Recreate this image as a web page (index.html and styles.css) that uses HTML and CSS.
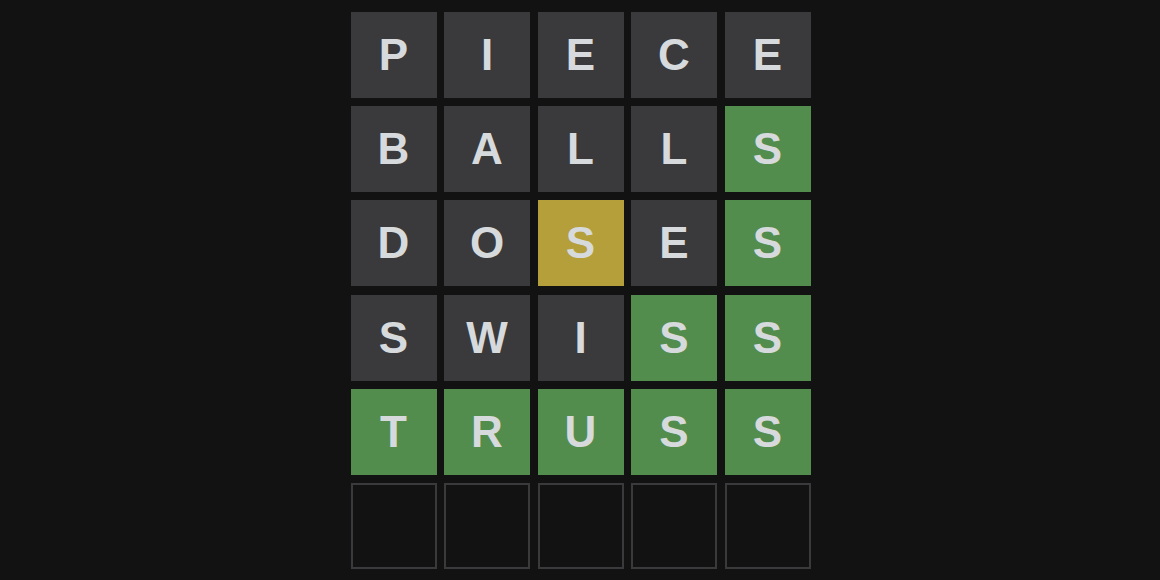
FILE: index.html
```html
<!DOCTYPE html>
<html lang="en">
<head>
<meta charset="utf-8">
<title>Wordle</title>
<link rel="stylesheet" href="styles.css">
</head>
<body>
<main class="page">
  <div class="board">
    <div class="tile absent">P</div><div class="tile absent">I</div><div class="tile absent">E</div><div class="tile absent">C</div><div class="tile absent">E</div>
    <div class="tile absent">B</div><div class="tile absent">A</div><div class="tile absent">L</div><div class="tile absent">L</div><div class="tile correct">S</div>
    <div class="tile absent">D</div><div class="tile absent">O</div><div class="tile present">S</div><div class="tile absent">E</div><div class="tile correct">S</div>
    <div class="tile absent">S</div><div class="tile absent">W</div><div class="tile absent">I</div><div class="tile correct">S</div><div class="tile correct">S</div>
    <div class="tile correct">T</div><div class="tile correct">R</div><div class="tile correct">U</div><div class="tile correct">S</div><div class="tile correct">S</div>
    <div class="tile empty"></div><div class="tile empty"></div><div class="tile empty"></div><div class="tile empty"></div><div class="tile empty"></div>
  </div>
</main>
</body>
</html>
```
FILE: styles.css
```css
html, body {
  margin: 0;
  padding: 0;
  background: #121213;
  height: 100%;
  overflow: hidden;
}
.page {
  display: flex;
  justify-content: center;
  padding: 12px 0 0 1px;
}
.board {
  display: grid;
  grid-template-columns: repeat(5, 1fr);
  grid-template-rows: repeat(6, 1fr);
  column-gap: 7.5px;
  row-gap: 8.2px;
  width: 460px;
  height: 557px;
}
.tile {
  display: flex;
  align-items: center;
  justify-content: center;
  box-sizing: border-box;
  font-family: "Liberation Sans", Arial, sans-serif;
  font-weight: 700;
  font-size: 44px;
  line-height: 1;
  color: #d7dadc;
}
.absent { background: #3a3a3c; }
.correct { background: #538d4e; }
.present { background: #b59f3b; }
.empty { border: 2px solid #3a3a3c; }
```
